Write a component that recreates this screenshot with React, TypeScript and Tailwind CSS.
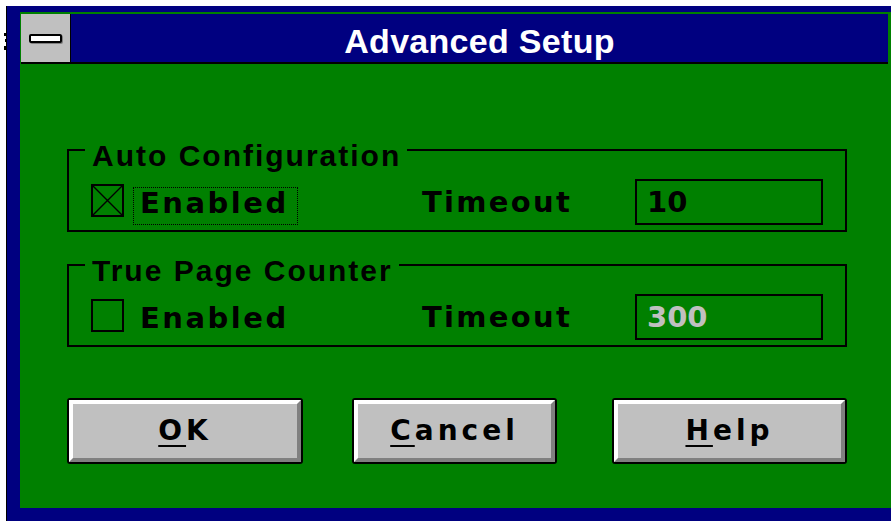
import React from 'react';

const sys = "font-['Liberation_Sans',Arial,sans-serif]";
const wide = "font-['DejaVu_Sans',Verdana,sans-serif]";

function CheckBox({ checked }: { checked: boolean }) {
    return (
        <div className="w-[33px] h-[33px] border-2 border-black shrink-0">
            {checked && (
                <svg width="29" height="29" viewBox="0 0 29 29" className="block">
                    <path d="M0 0L29 29M29 0L0 29" stroke="#000" strokeWidth="1.4" />
                </svg>
            )}
        </div>
    );
}

interface GroupProps {
    title: string;
    checked: boolean;
    focused: boolean;
    value: string;
    dim?: boolean;
    className?: string;
}

function Group({ title, checked, focused, value, dim, className }: GroupProps) {
    return (
        <fieldset className={`ml-[47px] w-[780px] border-2 border-black pb-[5px] ${className ?? ''}`}>
            <legend
                className={`ml-[16px] pl-[7px] pr-[6px] pt-[12px] text-[30px] leading-[30px] font-bold tracking-[2px] text-black ${sys}`}
            >
                {title}
            </legend>
            <div className="mt-[8px] h-[46px] flex pl-[22px]">
                <div className="mt-[5px]">
                    <CheckBox checked={checked} />
                </div>
                <div
                    className={`ml-[9px] w-[165px] h-[38px] self-end flex items-center pl-[6px] pb-[5px] border border-dotted ${
                        focused ? 'border-black' : 'border-transparent'
                    }`}
                >
                    <span className={`text-[29px] leading-[29px] font-bold tracking-[2.5px] text-black ${wide}`}>
                        Enabled
                    </span>
                </div>
                <div className="ml-[124px] w-[213px] flex items-center">
                    <span className={`text-[29px] leading-[29px] font-bold tracking-[2.3px] text-black ${wide}`}>
                        Timeout
                    </span>
                </div>
                <div className="w-[188px] h-full border-2 border-black flex items-center pl-[10px]">
                    <span
                        className={`text-[29px] leading-[29px] font-bold ${wide} ${
                            dim ? 'text-[#c0c0c0]' : 'text-black'
                        }`}
                    >
                        {value}
                    </span>
                </div>
            </div>
        </fieldset>
    );
}

function PushButton({ hot, rest, className }: { hot: string; rest: string; className: string }) {
    return (
        <div className={`h-[66px] border-2 border-black rounded-[3px] ${className}`}>
            <div className="h-full bg-[#c0c0c0] border-t-4 border-l-4 border-t-white border-l-white border-b-4 border-r-4 border-b-[#808080] border-r-[#808080] flex items-center justify-center">
                <span className={`text-[28px] leading-[28px] font-bold tracking-[4px] text-black ${wide}`}>
                    <span className="underline decoration-2 underline-offset-[5px]">{hot}</span>
                    {rest}
                </span>
            </div>
        </div>
    );
}

export default function App() {
    return (
        <div className="w-[891px] h-[521px] bg-white flex overflow-hidden">
            {/* stray pixels left of the window frame */}
            <div className="w-[6px] shrink-0">
                <svg width="6" height="20" viewBox="0 0 6 20" className="block mt-[33px]">
                    <rect x="4" y="0" width="2" height="3" fill="#000" />
                    <rect x="5" y="6" width="1" height="3" fill="#000" />
                    <rect x="4" y="13" width="2" height="4" fill="#000" />
                </svg>
            </div>

            <div className="flex-1 mt-[6px] border-l border-black bg-[#000080] pt-[6px] pl-[13px] pb-[13px] flex">
                <div className="flex-1 flex flex-col bg-[#008000]">
                    {/* caption */}
                    <div className="mt-[2px] ml-[1px] mr-[3px] h-[50px] border-b-2 border-black flex shrink-0">
                        <div className="w-[50px] bg-[#c0c0c0] border-r border-black flex items-center justify-center">
                            <div className="w-[33px] h-[9px] border-2 border-black rounded-[2px] bg-white shadow-[1px_1px_0_#808080]" />
                        </div>
                        <div className="flex-1 bg-[#000080] flex items-center justify-center pt-[5px]">
                            <span className={`text-[34px] leading-[34px] font-bold tracking-[0.3px] text-white ${sys}`}>
                                Advanced Setup
                            </span>
                        </div>
                    </div>

                    {/* client */}
                    <div className="flex-1 flex flex-col pt-[65px]">
                        <Group title="Auto Configuration" checked focused value="10" />
                        <Group
                            title="True Page Counter"
                            checked={false}
                            focused={false}
                            value="300"
                            dim
                            className="mt-[12px]"
                        />
                        <div className="mt-[51px] flex pl-[47px]">
                            <PushButton hot="O" rest="K" className="w-[236px]" />
                            <PushButton hot="C" rest="ancel" className="ml-[49px] w-[205px]" />
                            <PushButton hot="H" rest="elp" className="ml-[55px] w-[235px]" />
                        </div>
                    </div>
                </div>
            </div>
        </div>
    );
}
